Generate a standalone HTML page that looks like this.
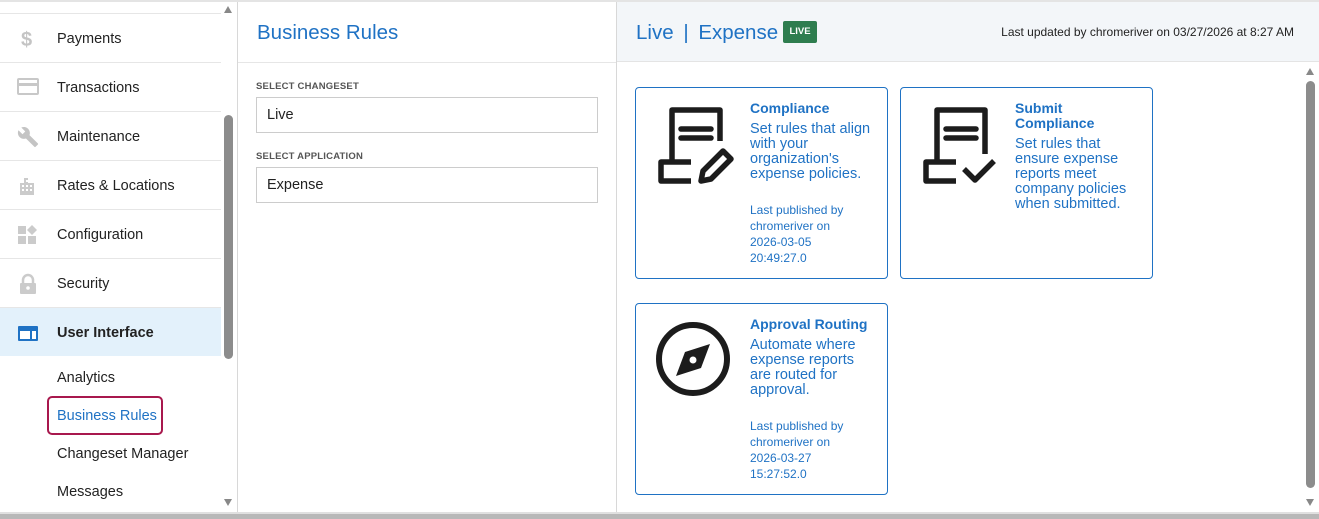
<!DOCTYPE html>
<html><head><meta charset="utf-8"><style>
*{box-sizing:border-box;margin:0;padding:0}
body{width:1319px;height:519px;overflow:hidden;background:#fff;font-family:"Liberation Sans",Arial,sans-serif;position:relative;color:#222}
.abs{position:absolute}
.nav{position:absolute;left:0;width:221px;height:49px;border-bottom:1px solid #e6e6e6}
.nav span{position:absolute;left:57px;top:17px;font-size:14.5px;color:#222}
.nav svg{position:absolute;left:17px;top:14px}
.sub{position:absolute;left:57px;font-size:14.5px;color:#222}
.blue{color:#1f72c4}
.card{position:absolute;width:253px;border:1px solid #1f72c4;border-radius:4px;background:#fff}
.card .t{position:absolute;left:114px;top:13px;width:135px;font-size:14px;font-weight:bold;color:#1f72c4;line-height:15px;white-space:nowrap}
.card .d{font-weight:normal;font-size:14.5px;line-height:15px;margin-top:6px}
.card .p{font-weight:normal;font-size:12px;line-height:16px;margin-top:20px}
.card svg{position:absolute;left:19px;top:17px}
</style></head><body>
<div class="abs" style="left:0;top:0;width:1319px;height:2px;background:#e4e4e4"></div>
<!-- sidebar -->
<div class="abs" style="left:0;top:13px;width:221px;height:1px;background:#e6e6e6"></div>
<div class="nav" style="top:14px"><svg width="20" height="22" viewBox="0 0 20 22"><text x="4" y="18" font-size="20" font-weight="bold" fill="#c4c4c4" font-family="Liberation Sans">$</text></svg><span>Payments</span></div>
<div class="nav" style="top:63px"><svg width="22" height="20" viewBox="0 0 22 20"><rect x="1" y="2" width="20" height="15" rx="1" fill="none" stroke="#c8c8c8" stroke-width="2"/><rect x="1" y="6" width="20" height="3" fill="#c8c8c8"/></svg><span>Transactions</span></div>
<div class="nav" style="top:112px"><svg width="22" height="22" viewBox="0 0 24 24"><path d="M22.7 19l-9.1-9.1c.9-2.3.4-5-1.5-6.9-2-2-5-2.4-7.4-1.3L9 6 6 9 1.6 4.7C.4 7.1.9 10.1 2.9 12.1c1.9 1.9 4.6 2.4 6.9 1.5l9.1 9.1c.4.4 1 .4 1.4 0l2.3-2.3c.5-.4.5-1.1.1-1.4z" fill="#c4c4c4"/></svg><span>Maintenance</span></div>
<div class="nav" style="top:161px"><svg width="22" height="22" viewBox="0 0 22 22"><path d="M3 20V8h4V3h4v5h6v12z" fill="#cbcbcb"/><g fill="#fff"><rect x="5" y="10" width="2" height="2"/><rect x="9" y="10" width="2" height="2"/><rect x="13" y="10" width="2" height="2"/><rect x="5" y="14" width="2" height="2"/><rect x="9" y="14" width="2" height="2"/><rect x="13" y="14" width="2" height="2"/><rect x="9" y="5" width="2" height="2"/></g></svg><span>Rates &amp; Locations</span></div>
<div class="nav" style="top:210px"><svg width="22" height="22" viewBox="0 0 22 22"><g fill="#cbcbcb"><rect x="1" y="2" width="8" height="8"/><rect x="1" y="12" width="8" height="8"/><rect x="11" y="12" width="8" height="8"/><path d="M15 1l5 5-5 5-5-5z"/></g></svg><span>Configuration</span></div>
<div class="nav" style="top:259px"><svg width="22" height="22" viewBox="0 0 22 22"><path d="M6 10V7a5 5 0 0110 0v3" fill="none" stroke="#cbcbcb" stroke-width="2.5"/><rect x="3" y="10" width="16" height="11" rx="1" fill="#cbcbcb"/><circle cx="11" cy="15" r="1.8" fill="#fff"/></svg><span>Security</span></div>
<div class="nav" style="top:308px;background:#e3f1fb;height:48px;border:none"><svg width="22" height="22" viewBox="0 0 22 22"><rect x="1" y="4" width="20" height="15" rx="1" fill="#1f72c4"/><rect x="3" y="9" width="10" height="8" fill="#fff"/><rect x="15" y="9" width="4" height="8" fill="#fff"/></svg><span style="font-weight:bold">User Interface</span></div>
<div class="sub" style="top:370px">Analytics</div>
<div class="abs" style="left:47px;top:396px;width:116px;height:39px;border:2px solid #a8184d;border-radius:5px"></div>
<div class="sub blue" style="top:408px">Business Rules</div>
<div class="sub" style="top:446px">Changeset Manager</div>
<div class="sub" style="top:484px">Messages</div>
<!-- sidebar scrollbar -->
<div class="abs" style="left:221px;top:2px;width:15px;height:511px;background:#fff"></div>
<div class="abs" style="left:224px;top:6px;width:0;height:0;border-left:4px solid transparent;border-right:4px solid transparent;border-bottom:7px solid #888"></div>
<div class="abs" style="left:224px;top:115px;width:9px;height:244px;background:#8c8c8c;border-radius:5px"></div>
<div class="abs" style="left:224px;top:499px;width:0;height:0;border-left:4px solid transparent;border-right:4px solid transparent;border-top:7px solid #888"></div>
<div class="abs" style="left:237px;top:2px;width:1px;height:511px;background:#d8d8d8"></div>
<!-- middle -->
<div class="abs blue" style="left:257px;top:21px;font-size:20.5px">Business Rules</div>
<div class="abs" style="left:238px;top:62px;width:378px;height:1px;background:#e6e6e6"></div>
<div class="abs" style="left:256px;top:81px;font-size:9.5px;font-weight:bold;color:#555;letter-spacing:.2px">SELECT CHANGESET</div>
<div class="abs" style="left:256px;top:97px;width:342px;height:36px;border:1px solid #ccc;font-size:14.5px;padding:9px 10px">Live</div>
<div class="abs" style="left:256px;top:151px;font-size:9.5px;font-weight:bold;color:#555;letter-spacing:.2px">SELECT APPLICATION</div>
<div class="abs" style="left:256px;top:167px;width:342px;height:36px;border:1px solid #ccc;font-size:14.5px;padding:9px 10px">Expense</div>
<div class="abs" style="left:616px;top:2px;width:1px;height:511px;background:#d8d8d8"></div>
<!-- right -->
<div class="abs" style="left:617px;top:2px;width:702px;height:60px;background:#f3f6f9;border-bottom:1px solid #e4e4e4"></div>
<div class="abs blue" style="left:636px;top:21px;font-size:20.5px">Live <span style="margin:0 4px">|</span> Expense</div>
<div class="abs" style="left:783px;top:21px;width:34px;height:22px;background:#2e7d4f;border-radius:2px;color:#fff;font-size:9.5px;font-weight:bold;text-align:center;line-height:22px">LIVE</div>
<div class="abs" style="right:25px;top:25px;font-size:12px;color:#222">Last updated by chromeriver on 03/27/2026 at 8:27 AM</div>
<div class="card" style="left:635px;top:87px;height:192px">
<svg width="82" height="82" viewBox="0 0 82 82"><path d="M17 57V5h48v31" fill="none" stroke="#1c1c1c" stroke-width="5.5" stroke-linejoin="round"/><path d="M26 24h30M26 33h30" stroke="#1c1c1c" stroke-width="5.5" stroke-linecap="round"/><path d="M36 57H6v19h30" fill="none" stroke="#1c1c1c" stroke-width="5.5" stroke-linejoin="round"/><path d="M46 76l2-10 20-20 8 8-20 20z" fill="none" stroke="#1c1c1c" stroke-width="5.5" stroke-linejoin="round"/></svg>
<div class="t">Compliance<div class="d">Set rules that align<br>with your<br>organization's<br>expense policies.</div><div class="p">Last published by<br>chromeriver on<br>2026-03-05<br>20:49:27.0</div></div></div>
<div class="card" style="left:900px;top:87px;height:192px">
<svg width="82" height="82" viewBox="0 0 82 82"><path d="M17 57V5h48v44" fill="none" stroke="#1c1c1c" stroke-width="5.5" stroke-linejoin="round"/><path d="M26 24h30M26 33h30" stroke="#1c1c1c" stroke-width="5.5" stroke-linecap="round"/><path d="M36 57H6v19h30" fill="none" stroke="#1c1c1c" stroke-width="5.5" stroke-linejoin="round"/><path d="M44 64l11 11 19-19" fill="none" stroke="#1c1c1c" stroke-width="5.5" stroke-linejoin="round"/></svg>
<div class="t">Submit<br>Compliance<div class="d">Set rules that<br>ensure expense<br>reports meet<br>company policies<br>when submitted.</div></div></div>
<div class="card" style="left:635px;top:303px;height:192px">
<svg width="82" height="82" viewBox="0 0 82 82"><circle cx="38" cy="38" r="34" fill="none" stroke="#1c1c1c" stroke-width="6"/><path d="M55 23L46 47 21 55 30 31z" fill="#1c1c1c"/><circle cx="38" cy="39" r="3.5" fill="#fff"/></svg>
<div class="t">Approval Routing<div class="d">Automate where<br>expense reports<br>are routed for<br>approval.</div><div class="p">Last published by<br>chromeriver on<br>2026-03-27<br>15:27:52.0</div></div></div>
<!-- right scrollbar -->
<div class="abs" style="left:1306px;top:68px;width:0;height:0;border-left:4px solid transparent;border-right:4px solid transparent;border-bottom:7px solid #888"></div>
<div class="abs" style="left:1306px;top:81px;width:9px;height:407px;background:#8c8c8c;border-radius:5px"></div>
<div class="abs" style="left:1306px;top:499px;width:0;height:0;border-left:4px solid transparent;border-right:4px solid transparent;border-top:7px solid #888"></div>
<!-- bottom -->
<div class="abs" style="left:0;top:512px;width:1319px;height:2px;background:#e0e0e0"></div>
<div class="abs" style="left:0;top:514px;width:1319px;height:5px;background:#b8b8b8"></div>
</body></html>
